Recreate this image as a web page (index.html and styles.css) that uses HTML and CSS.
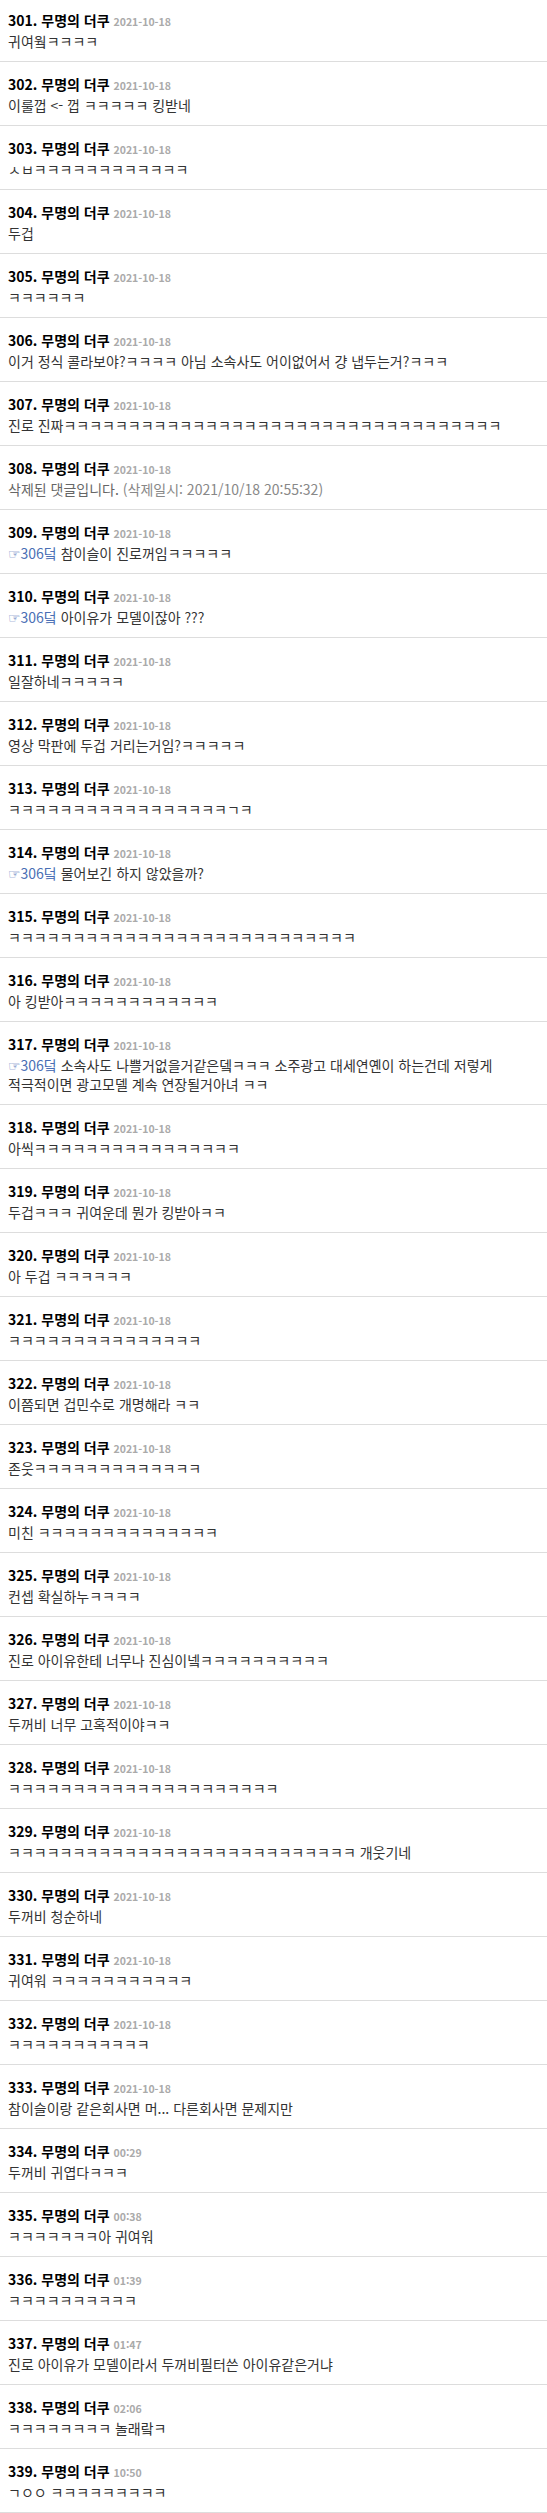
FILE: index.html
```html
<!DOCTYPE html>
<html lang="ko">
<head>
    <meta charset="UTF-8">
    <meta name="viewport" content="width=device-width, initial-scale=1.0">
    <title>댓글</title>
    <link rel="stylesheet" href="styles.css">
</head>
<body>
    <ul class="comments">
        <li class="comment">
            <div class="comment-head">301. 무명의 더쿠 <span class="date">2021-10-18</span></div>
            <div class="comment-body">귀여웤ㅋㅋㅋㅋ</div>
        </li>
        <li class="comment">
            <div class="comment-head">302. 무명의 더쿠 <span class="date">2021-10-18</span></div>
            <div class="comment-body">이룰껍 &lt;- 껍 ㅋㅋㅋㅋㅋ 킹받네</div>
        </li>
        <li class="comment">
            <div class="comment-head">303. 무명의 더쿠 <span class="date">2021-10-18</span></div>
            <div class="comment-body">ㅅㅂㅋㅋㅋㅋㅋㅋㅋㅋㅋㅋㅋㅋ</div>
        </li>
        <li class="comment">
            <div class="comment-head">304. 무명의 더쿠 <span class="date">2021-10-18</span></div>
            <div class="comment-body">두겁</div>
        </li>
        <li class="comment">
            <div class="comment-head">305. 무명의 더쿠 <span class="date">2021-10-18</span></div>
            <div class="comment-body">ㅋㅋㅋㅋㅋㅋ</div>
        </li>
        <li class="comment">
            <div class="comment-head">306. 무명의 더쿠 <span class="date">2021-10-18</span></div>
            <div class="comment-body">이거 정식 콜라보야?ㅋㅋㅋㅋ 아님 소속사도 어이없어서 걍 냅두는거?ㅋㅋㅋ</div>
        </li>
        <li class="comment">
            <div class="comment-head">307. 무명의 더쿠 <span class="date">2021-10-18</span></div>
            <div class="comment-body">진로 진짜ㅋㅋㅋㅋㅋㅋㅋㅋㅋㅋㅋㅋㅋㅋㅋㅋㅋㅋㅋㅋㅋㅋㅋㅋㅋㅋㅋㅋㅋㅋㅋㅋㅋㅋ</div>
        </li>
        <li class="comment">
            <div class="comment-head">308. 무명의 더쿠 <span class="date">2021-10-18</span></div>
            <div class="comment-body deleted">삭제된 댓글입니다. <span class="deleted-at">(삭제일시: 2021/10/18 20:55:32)</span></div>
        </li>
        <li class="comment">
            <div class="comment-head">309. 무명의 더쿠 <span class="date">2021-10-18</span></div>
            <div class="comment-body"><a href="#" class="reply"><span class="finger">☞</span>306덬</a> 참이슬이 진로꺼임ㅋㅋㅋㅋㅋ</div>
        </li>
        <li class="comment">
            <div class="comment-head">310. 무명의 더쿠 <span class="date">2021-10-18</span></div>
            <div class="comment-body"><a href="#" class="reply"><span class="finger">☞</span>306덬</a> 아이유가 모델이잖아 ???</div>
        </li>
        <li class="comment">
            <div class="comment-head">311. 무명의 더쿠 <span class="date">2021-10-18</span></div>
            <div class="comment-body">일잘하네ㅋㅋㅋㅋㅋ</div>
        </li>
        <li class="comment">
            <div class="comment-head">312. 무명의 더쿠 <span class="date">2021-10-18</span></div>
            <div class="comment-body">영상 막판에 두겁 거리는거임?ㅋㅋㅋㅋㅋ</div>
        </li>
        <li class="comment">
            <div class="comment-head">313. 무명의 더쿠 <span class="date">2021-10-18</span></div>
            <div class="comment-body">ㅋㅋㅋㅋㅋㅋㅋㅋㅋㅋㅋㅋㅋㅋㅋㅋㅋㄱㅋ</div>
        </li>
        <li class="comment">
            <div class="comment-head">314. 무명의 더쿠 <span class="date">2021-10-18</span></div>
            <div class="comment-body"><a href="#" class="reply"><span class="finger">☞</span>306덬</a> 물어보긴 하지 않았을까?</div>
        </li>
        <li class="comment">
            <div class="comment-head">315. 무명의 더쿠 <span class="date">2021-10-18</span></div>
            <div class="comment-body">&#12619;&#12619;&#12619;&#12619;&#12619;&#12619;&#12619;&#12619;&#12619;&#12619;&#12619;&#12619;&#12619;&#12619;&#12619;&#12619;&#12619;&#12619;&#12619;&#12619;&#12619;&#12619;&#12619;&#12619;&#12619;&#12619;&#12619;</div>
        </li>
        <li class="comment">
            <div class="comment-head">316. 무명의 더쿠 <span class="date">2021-10-18</span></div>
            <div class="comment-body">아 킹받아ㅋㅋㅋㅋㅋㅋㅋㅋㅋㅋㅋㅋ</div>
        </li>
        <li class="comment">
            <div class="comment-head">317. 무명의 더쿠 <span class="date">2021-10-18</span></div>
            <div class="comment-body"><a href="#" class="reply"><span class="finger">☞</span>306덬</a> 소속사도 나쁠거없을거같은뎈ㅋㅋㅋ 소주광고 대세연옌이 하는건데 저렇게 적극적이면 광고모델 계속 연장될거아녀 ㅋㅋ</div>
        </li>
        <li class="comment">
            <div class="comment-head">318. 무명의 더쿠 <span class="date">2021-10-18</span></div>
            <div class="comment-body">아씩ㅋㅋㅋㅋㅋㅋㅋㅋㅋㅋㅋㅋㅋㅋㅋㅋ</div>
        </li>
        <li class="comment">
            <div class="comment-head">319. 무명의 더쿠 <span class="date">2021-10-18</span></div>
            <div class="comment-body">두겁ㅋㅋㅋ 귀여운데 뭔가 킹받아ㅋㅋ</div>
        </li>
        <li class="comment">
            <div class="comment-head">320. 무명의 더쿠 <span class="date">2021-10-18</span></div>
            <div class="comment-body">아 두겁 ㅋㅋㅋㅋㅋㅋ</div>
        </li>
        <li class="comment">
            <div class="comment-head">321. 무명의 더쿠 <span class="date">2021-10-18</span></div>
            <div class="comment-body">ㅋㅋㅋㅋㅋㅋㅋㅋㅋㅋㅋㅋㅋㅋㅋ</div>
        </li>
        <li class="comment">
            <div class="comment-head">322. 무명의 더쿠 <span class="date">2021-10-18</span></div>
            <div class="comment-body">이쯤되면 겁민수로 개명해라 ㅋㅋ</div>
        </li>
        <li class="comment">
            <div class="comment-head">323. 무명의 더쿠 <span class="date">2021-10-18</span></div>
            <div class="comment-body">존웃ㅋㅋㅋㅋㅋㅋㅋㅋㅋㅋㅋㅋㅋ</div>
        </li>
        <li class="comment">
            <div class="comment-head">324. 무명의 더쿠 <span class="date">2021-10-18</span></div>
            <div class="comment-body">미친 ㅋㅋㅋㅋㅋㅋㅋㅋㅋㅋㅋㅋㅋㅋ</div>
        </li>
        <li class="comment">
            <div class="comment-head">325. 무명의 더쿠 <span class="date">2021-10-18</span></div>
            <div class="comment-body">컨셉 확실하누ㅋㅋㅋㅋ</div>
        </li>
        <li class="comment">
            <div class="comment-head">326. 무명의 더쿠 <span class="date">2021-10-18</span></div>
            <div class="comment-body">진로 아이유한테 너무나 진심이넼ㅋㅋㅋㅋㅋㅋㅋㅋㅋㅋ</div>
        </li>
        <li class="comment">
            <div class="comment-head">327. 무명의 더쿠 <span class="date">2021-10-18</span></div>
            <div class="comment-body">두꺼비 너무 고혹적이야ㅋㅋ</div>
        </li>
        <li class="comment">
            <div class="comment-head">328. 무명의 더쿠 <span class="date">2021-10-18</span></div>
            <div class="comment-body">ㅋㅋㅋㅋㅋㅋㅋㅋㅋㅋㅋㅋㅋㅋㅋㅋㅋㅋㅋㅋㅋ</div>
        </li>
        <li class="comment">
            <div class="comment-head">329. 무명의 더쿠 <span class="date">2021-10-18</span></div>
            <div class="comment-body">ㅋㅋㅋㅋㅋㅋㅋㅋㅋㅋㅋㅋㅋㅋㅋㅋㅋㅋㅋㅋㅋㅋㅋㅋㅋㅋㅋ 개웃기네</div>
        </li>
        <li class="comment">
            <div class="comment-head">330. 무명의 더쿠 <span class="date">2021-10-18</span></div>
            <div class="comment-body">두꺼비 청순하네</div>
        </li>
        <li class="comment">
            <div class="comment-head">331. 무명의 더쿠 <span class="date">2021-10-18</span></div>
            <div class="comment-body">귀여워 ㅋㅋㅋㅋㅋㅋㅋㅋㅋㅋㅋ</div>
        </li>
        <li class="comment">
            <div class="comment-head">332. 무명의 더쿠 <span class="date">2021-10-18</span></div>
            <div class="comment-body">ㅋㅋㅋㅋㅋㅋㅋㅋㅋㅋㅋ</div>
        </li>
        <li class="comment">
            <div class="comment-head">333. 무명의 더쿠 <span class="date">2021-10-18</span></div>
            <div class="comment-body">참이슬이랑 같은회사면 머... 다른회사면 문제지만</div>
        </li>
        <li class="comment">
            <div class="comment-head">334. 무명의 더쿠 <span class="date">00:29</span></div>
            <div class="comment-body">두꺼비 귀엽다ㅋㅋㅋ</div>
        </li>
        <li class="comment">
            <div class="comment-head">335. 무명의 더쿠 <span class="date">00:38</span></div>
            <div class="comment-body">ㅋㅋㅋㅋㅋㅋㅋ아 귀여워</div>
        </li>
        <li class="comment">
            <div class="comment-head">336. 무명의 더쿠 <span class="date">01:39</span></div>
            <div class="comment-body">ㅋㅋㅋㅋㅋㅋㅋㅋㅋㅋ</div>
        </li>
        <li class="comment">
            <div class="comment-head">337. 무명의 더쿠 <span class="date">01:47</span></div>
            <div class="comment-body">진로 아이유가 모델이라서 두꺼비필터쓴 아이유같은거냐</div>
        </li>
        <li class="comment">
            <div class="comment-head">338. 무명의 더쿠 <span class="date">02:06</span></div>
            <div class="comment-body">ㅋㅋㅋㅋㅋㅋㅋㅋ 놀래랔ㅋ</div>
        </li>
        <li class="comment">
            <div class="comment-head">339. 무명의 더쿠 <span class="date">10:50</span></div>
            <div class="comment-body">ㄱㅇㅇ ㅋㅋㅋㅋㅋㅋㅋㅋㅋ</div>
        </li>
    </ul>
</body>
</html>
```

FILE: styles.css
```css
body {
    font-family: "Noto Sans CJK KR", sans-serif;
    margin: 0;
    padding: 0;
    background-color: #fff;
    color: #333;
}

.comments {
    list-style: none;
    margin: 0;
    padding: 0;
}

.comment {
    padding: 12px 8px 10px;
    border-bottom: 1px solid #ddd;
}

.comment:first-child {
    padding-top: 10px;
}

.comment-head {
    height: 20px;
    font-size: 14px;
    font-weight: bold;
    line-height: 20px;
    color: #000;
}

.date {
    font-size: 10.5px;
    line-height: 1;
    color: #aaa;
}

.comment-body {
    margin-top: 2px;
    font-size: 14px;
    line-height: 19px;
    word-break: keep-all;
}

.deleted {
    color: #666;
}

.deleted-at {
    color: #888;
}

.reply {
    color: #4a6fb5;
    font-weight: normal;
    text-decoration: none;
}

.finger {
    font-family: "DejaVu Sans", sans-serif;
    font-size: 14px;
    line-height: 1;
}
```
